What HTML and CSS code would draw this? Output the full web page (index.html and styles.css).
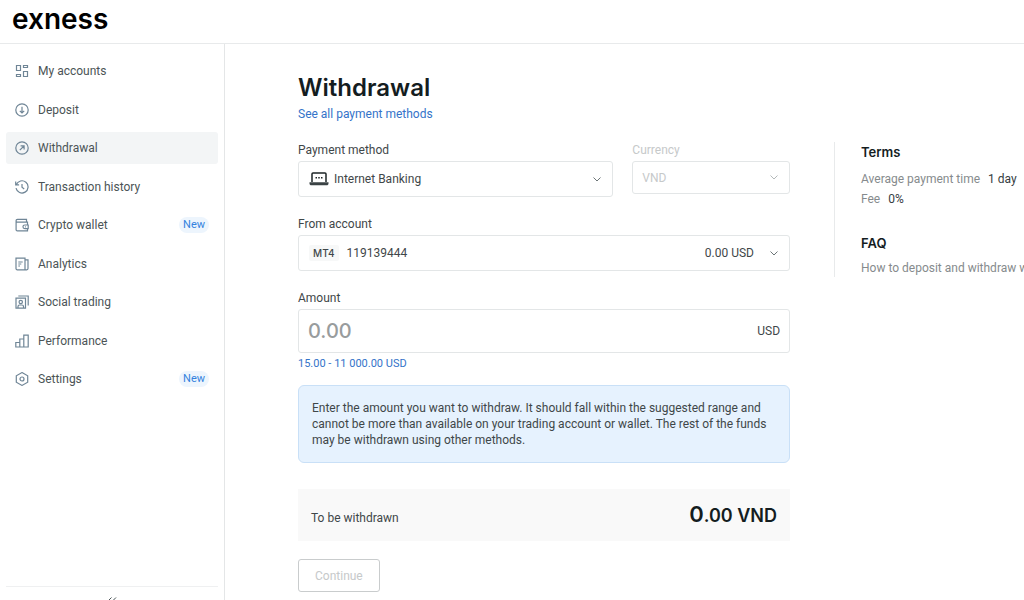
FILE: index.html
```html
<!DOCTYPE html>
<html lang="en">
<head>
  <meta charset="UTF-8">
  <meta name="viewport" content="width=device-width, initial-scale=1">
  <title>Withdrawal</title>
  <link rel="stylesheet" href="styles.css">
</head>
<body>

<header class="header">
  <a href="#" class="logo">exness</a>
</header>

<div class="layout">
  <aside class="sidebar">
    <nav class="nav">
      <a href="#" class="nav-item">
        <svg class="icon" viewBox="0 0 14 14"><path d="M1.500 1.500h4v5h-4zM8.500 1.500h4v2h-4zM1.500 10.500h4v2h-4zM8.500 7.500h4v5h-4z"/></svg>
        My accounts
      </a>
      <a href="#" class="nav-item">
        <svg class="icon" viewBox="0 0 14 14"><circle cx="7" cy="7" r="6.2"/><path d="M7 3.800v6M4.800 7.800L7 10l2.200-2.200"/></svg>
        Deposit
      </a>
      <a href="#" class="nav-item active">
        <svg class="icon" viewBox="0 0 14 14"><circle cx="7" cy="7" r="6.2"/><path d="M4.800 9.200l4.200-4.200M5.600 4.900h3.500v3.500"/></svg>
        Withdrawal
      </a>
      <a href="#" class="nav-item">
        <svg class="icon" viewBox="0 0 14 14"><path d="M1.300 4.600A6.100 6.100 0 1 1 1 8.200M.7 1.400v3.400h3.400M7 3.900v3.400l2.200 1.700"/></svg>
        Transaction history
      </a>
      <a href="#" class="nav-item">
        <svg class="icon" viewBox="0 0 14 14"><path d="M11.500 4V1.300H2.500a1.400 1.400 0 0 0 0 2.900h10V7M1.100 2.800v8.900c0 .7.500 1.200 1.200 1.200h10.200v-2.200M13.200 7H9.800a1.800 1.800 0 0 0 0 3.700h3.400zM10 8.900h.8"/></svg>
        Crypto wallet
        <span class="tag">New</span>
      </a>
      <a href="#" class="nav-item">
        <svg class="icon" viewBox="0 0 14 14"><path d="M1 1.200h9v11.600H2.200A1.200 1.200 0 0 1 1 11.600zM10 2.800h3v8.800c0 .7-.5 1.200-1.200 1.200H9.500M3.300 5h4.400M3.300 7h3M3.300 9h1.700"/></svg>
        Analytics
      </a>
      <a href="#" class="nav-item">
        <svg class="icon" viewBox="0 0 14 14"><path d="M1 3.200h9.500v10H1zM3.300 1h9.900v9.600M3 13v-1.600c0-.8.700-1.400 1.500-1.400H7c.8 0 1.500.6 1.500 1.400V13"/><circle cx="5.750" cy="7" r="1.700"/></svg>
        Social trading
      </a>
      <a href="#" class="nav-item">
        <svg class="icon" viewBox="0 0 14 14"><path d="M.8 8.500h4V13h-4zM4.800 5h4v8h-4zM8.800 1.200h4.400V13H8.800z"/></svg>
        Performance
      </a>
      <a href="#" class="nav-item">
        <svg class="icon" viewBox="0 0 14 14"><path d="M7 .600l5.700 3.200v6.400L7 13.400 1.300 10.200V3.800z"/><circle cx="7" cy="7" r="2"/></svg>
        Settings
        <span class="tag">New</span>
      </a>
    </nav>
    <div class="sidebar-footer">
      <button type="button" class="collapse" aria-label="Collapse menu">
        <svg viewBox="0 0 10 8"><path d="M4.500 .500L1 4l3.500 3.500M9 .500L5.500 4 9 7.500"/></svg>
      </button>
    </div>
  </aside>

  <main class="content">
    <h1>Withdrawal</h1>
    <a href="#" class="link">See all payment methods</a>

    <div class="columns">
      <form class="form">
        <div class="row">
          <div class="field method">
            <label for="method">Payment method</label>
            <div class="control">
              <svg class="laptop" viewBox="0 0 20 14"><path class="screen" d="M3 10V2c0-.6.400-1 1-1h12c.6 0 1 .4 1 1v8"/><path class="base" d="M.5 10.200h19v1.300c0 1-.8 1.800-1.800 1.800H2.300c-1 0-1.800-.8-1.800-1.800z"/><path class="dots" d="M6.500 5H8v1.500H6.500zM9.250 5h1.500v1.500h-1.500zM12 5h1.500v1.500H12z"/></svg>
              <select id="method">
                <option>Internet Banking</option>
              </select>
              <svg class="chevron" viewBox="0 0 8 5"><path d="M.5 .500L4 4 7.500 .500"/></svg>
            </div>
          </div>
          <div class="field currency">
            <label for="currency">Currency</label>
            <div class="control">
              <select id="currency" disabled>
                <option>VND</option>
              </select>
              <svg class="chevron" viewBox="0 0 8 5"><path d="M.5 .500L4 4 7.500 .500"/></svg>
            </div>
          </div>
        </div>

        <div class="field">
          <label for="account">From account</label>
          <div class="control">
            <span class="platform">MT4</span>
            <select id="account">
              <option>119139444</option>
            </select>
            <span class="balance">0.00 USD</span>
            <svg class="chevron" viewBox="0 0 8 5"><path d="M.5 .500L4 4 7.500 .500"/></svg>
          </div>
        </div>

        <div class="field amount">
          <label for="amount">Amount</label>
          <div class="control">
            <input type="text" id="amount" placeholder="0.00">
            <span>USD</span>
          </div>
          <p class="hint">15.00 - 11 000.00 USD</p>
        </div>

        <p class="notice">Enter the amount you want to withdraw. It should fall within the suggested range and cannot be more than available on your trading account or wallet. The rest of the funds may be withdrawn using other methods.</p>

        <div class="total">
          <span>To be withdrawn</span>
          <strong><span class="total-int">0</span>.00 VND</strong>
        </div>

        <button type="submit" class="continue" disabled>Continue</button>
      </form>

      <aside class="info">
        <h2>Terms</h2>
        <p>Average payment time <span>1 day</span></p>
        <p>Fee <span>0%</span></p>
        <h2>FAQ</h2>
        <a href="#">How to deposit and withdraw with</a>
      </aside>
    </div>
  </main>
</div>

</body>
</html>
```

FILE: styles.css
```css
* {
  box-sizing: border-box;
}
body {
  margin: 0;
  height: 100vh;
  display: flex;
  flex-direction: column;
  overflow: hidden;
  font-family: Roboto, "Liberation Sans", sans-serif;
  font-size: 12px;
  line-height: 16px;
  color: #3f4749;
  background: #fff;
}
h1, h2, p {
  margin: 0;
}
a {
  text-decoration: none;
}
svg {
  fill: none;
  flex-shrink: 0;
}
.header {
  flex-shrink: 0;
  height: 44px;
  padding: 0 12px;
  border-bottom: 1px solid #e8eaeb;
}
.logo {
  font-family: Inter, "Liberation Sans", sans-serif;
  font-size: 28px;
  line-height: 38px;
  font-weight: 600;
  color: #000;
}
.layout {
  flex: 1;
  min-height: 0;
  display: flex;
}

/* Sidebar */
.sidebar {
  flex: 0 0 225px;
  display: flex;
  flex-direction: column;
  padding: 11px 6px 0;
  border-right: 1px solid #e4e6e7;
  overflow: hidden;
}
.nav {
  min-height: 340px;
  display: flex;
  flex-direction: column;
  justify-content: space-between;
}
.nav-item {
  display: flex;
  align-items: center;
  gap: 9px;
  height: 32px;
  padding: 0 9px;
  border-radius: 3px;
  color: #4b5456;
}
.nav-item.active {
  background: #f3f5f6;
}
.icon {
  width: 14px;
  height: 14px;
  stroke: #6f8596;
  stroke-width: 1.2;
}
.tag {
  margin-left: auto;
  padding: 0 4px;
  border-radius: 8px;
  font-size: 11px;
  color: #3482de;
  background: #edf5fd;
}
.sidebar-footer {
  height: 14px;
  margin-top: auto;
  border-top: 1px solid #eff0f1;
  text-align: center;
}
.collapse {
  padding: 10px;
  border: 0;
  background: none;
}
.collapse svg {
  display: block;
  width: 10px;
  height: 8px;
  stroke: #4b5456;
}

/* Page */
.content {
  flex: 1;
  min-width: 0;
  padding: 28px 0 0 73px;
  overflow: hidden;
}
h1 {
  font-family: Inter, "Liberation Sans", sans-serif;
  font-size: 24px;
  line-height: 32px;
  font-weight: 600;
  color: #141d1f;
}
.link {
  display: block;
  margin-top: 2px;
  color: #3473c9;
}
.columns {
  display: grid;
  grid-template-columns: minmax(300px, 492px) minmax(180px, 1fr);
  gap: 44px;
  align-items: start;
  margin-top: 20px;
}
.form {
  display: flex;
  flex-direction: column;
}
.row {
  display: flex;
  gap: 19px;
}
.field {
  margin-bottom: 19px;
}
.method {
  flex: 2;
}
.currency {
  flex: 1;
}
.field label {
  display: block;
  margin-bottom: 3px;
}
.control {
  display: flex;
  align-items: center;
  height: 36px;
  padding: 0 11px 0 10px;
  border: 1px solid #e3e6e7;
  border-radius: 3px;
}
select, input, button {
  font: inherit;
  color: inherit;
}
select, input {
  flex: 1;
  min-width: 0;
  padding: 0;
  border: 0;
  outline: 0;
  appearance: none;
  background: transparent;
}
.chevron {
  width: 8px;
  height: 5px;
  stroke: #6c7577;
}
.laptop {
  width: 20px;
  height: 14px;
  margin-right: 5px;
}
.screen {
  stroke: #1d2426;
  stroke-width: 1.5;
}
.base {
  fill: #3b4345;
}
.dots {
  fill: #1d2426;
}
.currency label, .currency select {
  color: #c6c9ca;
  opacity: 1;
}
.currency .control {
  height: 33px;
  padding-left: 9px;
}
.currency .chevron {
  stroke: #b4b9ba;
}
.platform {
  margin-right: 8px;
  padding: 0 4px;
  border-radius: 2px;
  font-family: Inter, "Liberation Sans", sans-serif;
  font-size: 10px;
  font-weight: 500;
  background: #f7f8f8;
}
.balance {
  margin-right: 16px;
}
.amount {
  margin-bottom: 13px;
}
.amount .control {
  height: 44px;
  padding: 0 9px;
}
.amount input {
  font-family: Inter, "Liberation Sans", sans-serif;
  font-size: 20px;
  line-height: 24px;
  font-weight: 500;
}
.amount input::placeholder {
  color: #989c9d;
}
.hint {
  margin-top: 3px;
  font-size: 11px;
  color: #3473c9;
}
.notice {
  padding: 14px 13px;
  border: 1px solid #c9e0f7;
  border-radius: 6px;
  background: #e6f2fe;
}
.total {
  display: flex;
  justify-content: space-between;
  align-items: baseline;
  margin-top: 26px;
  padding: 10px 13px;
  background: #f9f9f9;
}
.total strong {
  font-family: Inter, "Liberation Sans", sans-serif;
  font-size: 18px;
  line-height: 30px;
  font-weight: 600;
  color: #141d1f;
}
.total-int {
  font-size: 22px;
}
.continue {
  align-self: flex-start;
  height: 33px;
  margin-top: 18px;
  padding: 0 16px;
  border: 1px solid #c9cccd;
  border-radius: 3px;
  color: #c6c9ca;
  background: #fff;
}

/* Terms and FAQ */
.info {
  padding: 0 0 1px 26px;
  border-left: 1px solid #e8eaeb;
  white-space: nowrap;
  overflow: hidden;
}
.info h2 {
  margin-bottom: 7px;
  font-family: Inter, "Liberation Sans", sans-serif;
  font-size: 13px;
  line-height: 20px;
  font-weight: 600;
  color: #141d1f;
}
.info p {
  line-height: 20px;
  color: #868b8d;
}
.info p span {
  margin-left: 5px;
  color: #353d3f;
}
.info p + h2 {
  margin-top: 24px;
}
.info a {
  color: #868b8d;
}
```
